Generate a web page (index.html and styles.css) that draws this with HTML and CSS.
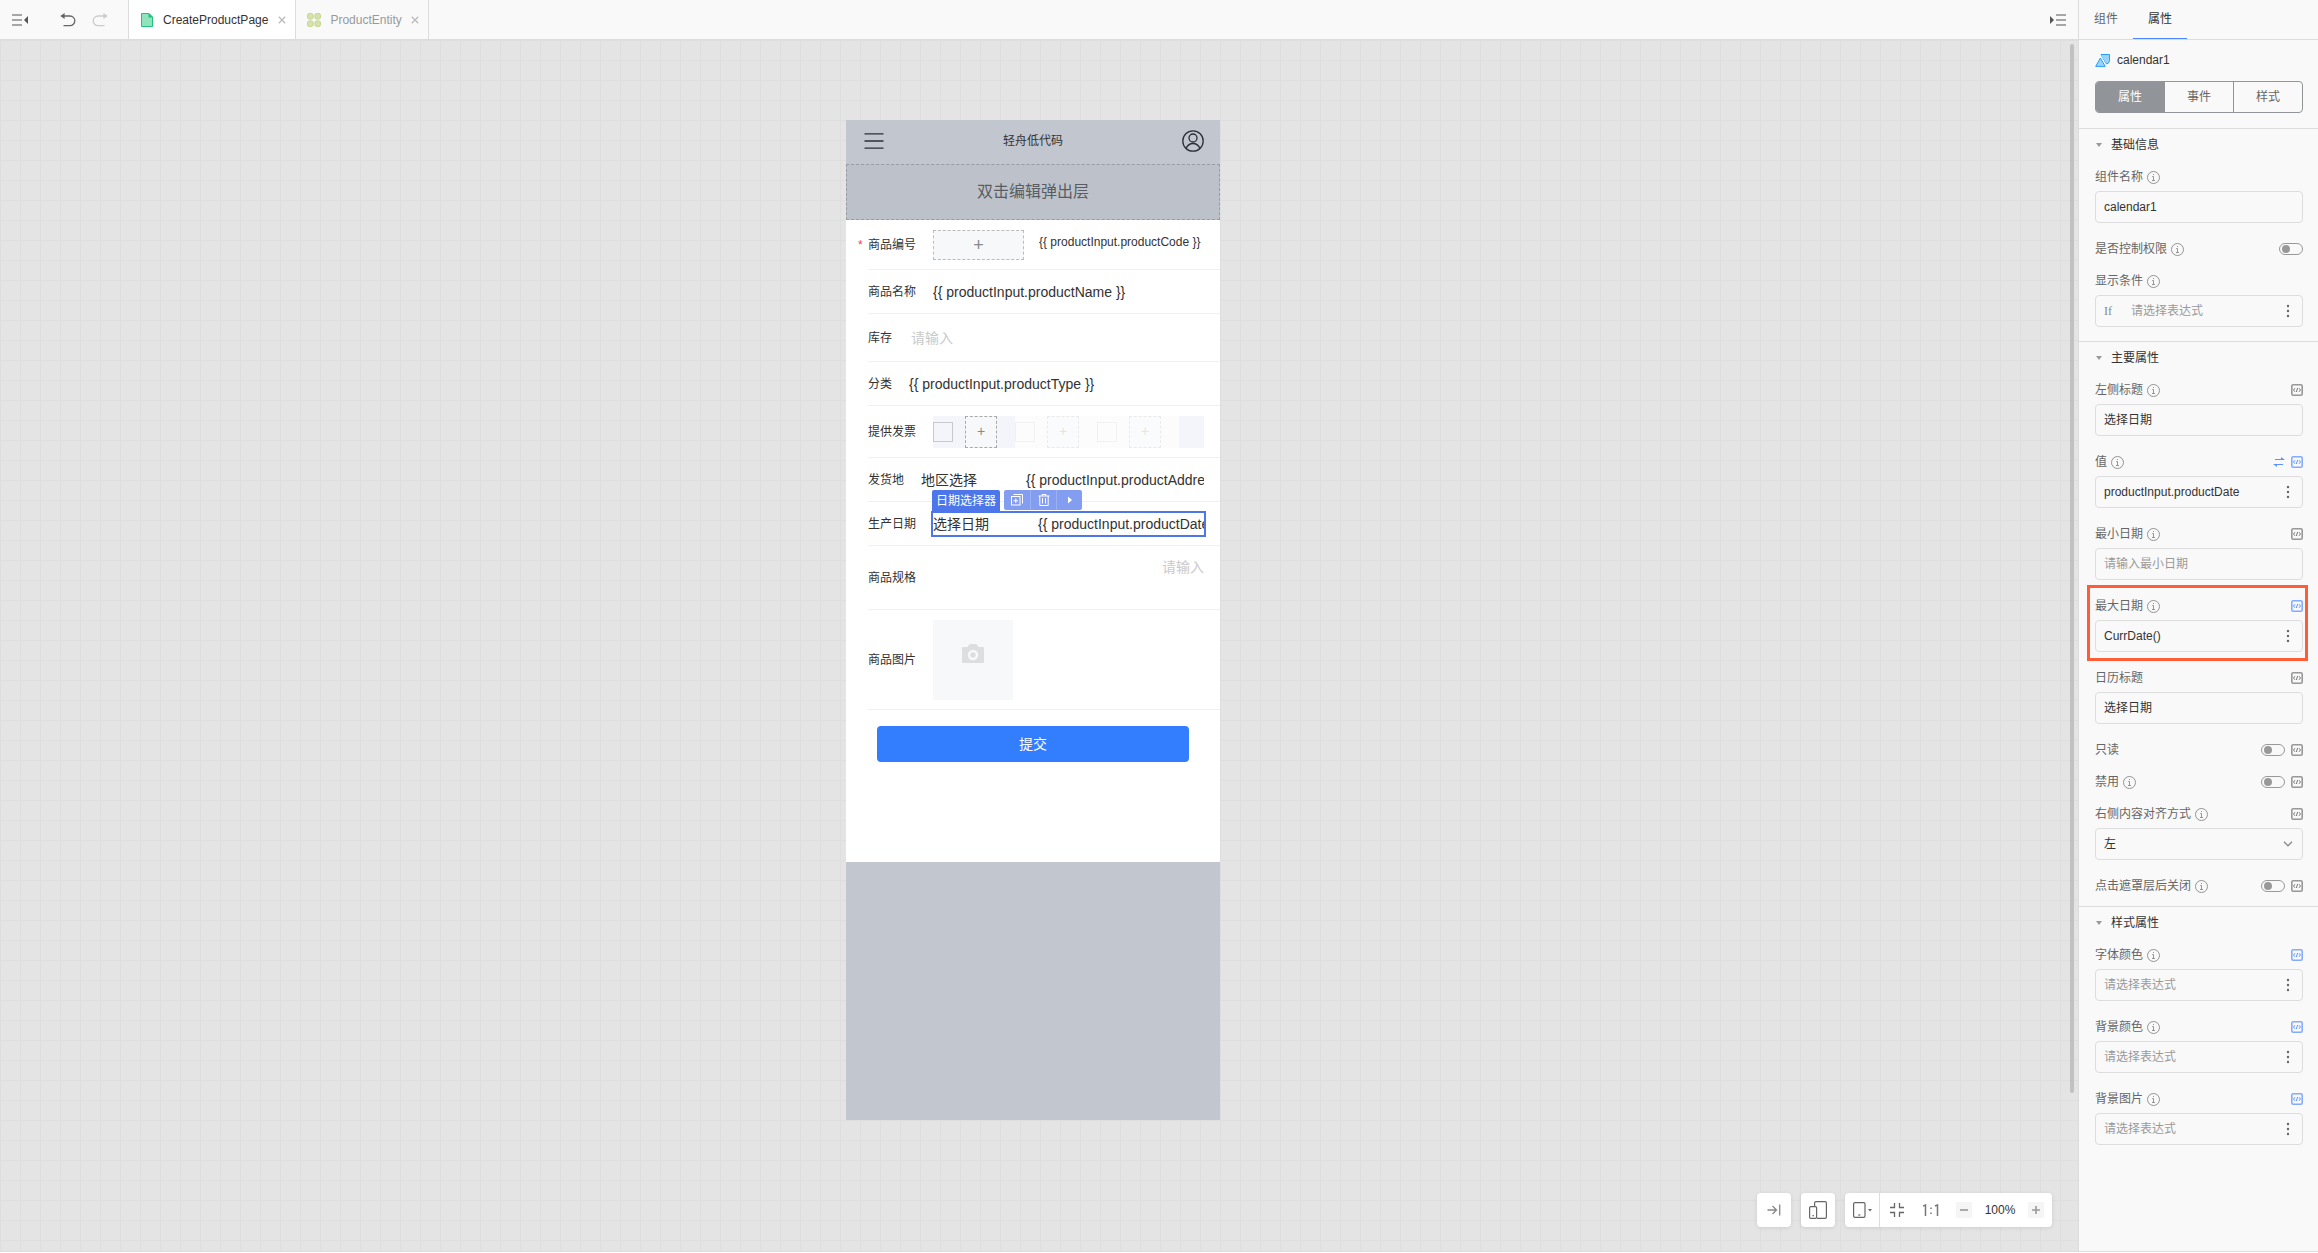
FILE: index.html
```html
<!DOCTYPE html>
<html lang="zh-CN">
	<head>
		<meta charset="UTF-8" />
		<meta name="viewport" content="width=device-width, initial-scale=1.0" />
		<title>CreateProductPage</title>
		<link rel="stylesheet" href="styles.css">
	</head>
	<body>
		<svg class="sprite" aria-hidden="true">
			<symbol id="info" viewBox="0 0 13 13">
				<circle cx="6.5" cy="6.5" r="6" fill="none" stroke="currentColor" stroke-width="0.9" />
				<path d="M6 3.500h1M5.200 5.500h1.300v3.500M5 9.500h3" fill="none" stroke="currentColor" stroke-width="0.9" />
			</symbol>
			<symbol id="code" viewBox="0 0 12 12">
				<rect x="0.8" y="0.8" width="10.4" height="10.4" rx="1.4" fill="none" stroke="currentColor" stroke-width="1.600" opacity="0.75" />
				<path d="M4 4.200L2.500 6l1.500 1.800M8 4.200L9.500 6 8 7.800M6.600 4L5.400 8" fill="none" stroke="currentColor" />
			</symbol>
			<symbol id="dots" viewBox="0 0 4 14">
				<circle cx="2" cy="2" r="1.2" /><circle cx="2" cy="7" r="1.2" /><circle cx="2" cy="12" r="1.2" />
			</symbol>
			<symbol id="close" viewBox="0 0 8 8">
				<path d="M0.8 0.8l6.4 6.4M7.2 0.8L0.8 7.2" fill="none" stroke="currentColor" stroke-width="1.3" />
			</symbol>
			<symbol id="undo" viewBox="0 0 16 14">
				<path d="M1.5 3H10a4.7 4.7 0 0 1 0 9.6H3.5" fill="none" stroke="currentColor" stroke-width="1.3" />
				<path d="M0.3 3L4.6 0v6z" fill="currentColor" />
			</symbol>
			<symbol id="fold" viewBox="0 0 16 12">
				<path d="M0 1h10M0 6h10M0 11h10" fill="none" stroke="#a6a6a6" stroke-width="1.8" />
				<path d="M16 2v8l-4-4z" fill="#555" />
			</symbol>
		</svg>
		<div class="app">
			<main class="editor">
				<header class="topbar">
					<div class="tools">
						<button class="icon-btn" aria-label="收起"><svg width="16" height="12"><use href="#fold" /></svg></button>
						<button class="icon-btn undo" aria-label="撤销"><svg width="16" height="14"><use href="#undo" /></svg></button>
						<button class="icon-btn redo" aria-label="重做"><svg width="16" height="14"><use href="#undo" /></svg></button>
					</div>
					<div class="tab active">
						<svg width="12" height="14" viewBox="0 0 12 14"><path d="M0.5 0.5H8L11.5 4v9.5H0.5z" fill="#8fe3bd" stroke="#1fc17b" /><path d="M7.5 0L12 4.6H7.5z" fill="#1fc17b" /></svg>
						<span>CreateProductPage</span>
						<button class="icon-btn" aria-label="关闭"><svg width="8" height="8"><use href="#close" /></svg></button>
					</div>
					<div class="tab">
						<svg width="14" height="14" viewBox="0 0 14 14" fill="#d5e2ae" stroke="#c3d68d"><rect x="0.5" y="0.5" width="5.6" height="5.6" rx="1.8" /><rect x="7.9" y="0.5" width="5.6" height="5.6" rx="1.8" /><rect x="0.5" y="7.9" width="5.6" height="5.6" rx="1.8" /><rect x="7.9" y="7.9" width="5.6" height="5.6" rx="1.8" /></svg>
						<span>ProductEntity</span>
						<button class="icon-btn" aria-label="关闭"><svg width="8" height="8"><use href="#close" /></svg></button>
					</div>
					<button class="icon-btn unfold" aria-label="展开"><svg width="16" height="12"><use href="#fold" /></svg></button>
				</header>
				<div class="canvas">
					<div class="phone">
						<div class="phone-head">
							<svg width="20" height="16" viewBox="0 0 20 16"><path d="M0.5 0.8h19M0.5 8h19M0.5 15.2h19" fill="none" stroke="#2b2f38" stroke-width="1.3" /></svg>
							<span>轻舟低代码</span>
							<svg width="22" height="22" viewBox="0 0 22 22" fill="none" stroke="#2b2f38" stroke-width="1.3"><circle cx="11" cy="11" r="10.2" /><circle cx="11" cy="8" r="4" /><path d="M4 18.4c1.6-3.4 4-4.9 7-4.9s5.400 1.5 7 4.900" /></svg>
						</div>
						<div class="popup">双击编辑弹出层</div>
						<form class="form">
							<div class="cell cell-code">
								<span class="cell-label required">商品编号</span>
								<button type="button" class="slot">+</button>
								<span class="small">{{ productInput.productCode }}</span>
							</div>
							<div class="cell">
								<span class="cell-label">商品名称</span>
								<span>{{ productInput.productName }}</span>
							</div>
							<div class="cell cell-stock">
								<label class="cell-label" for="stock">库存</label>
								<input id="stock" type="text" placeholder="请输入" />
							</div>
							<div class="cell">
								<span class="cell-label">分类</span>
								<span>{{ productInput.productType }}</span>
							</div>
							<div class="cell cell-invoice">
								<span class="cell-label">提供发票</span>
								<div class="strip">
									<div class="group"><input type="checkbox" aria-label="发票" /><span>+</span></div>
									<div class="group ghost"><input type="checkbox" aria-label="发票" /><span>+</span></div>
									<div class="group ghost"><input type="checkbox" aria-label="发票" /><span>+</span></div>
								</div>
							</div>
							<div class="cell">
								<span class="cell-label">发货地</span>
								<div class="picker"><span>地区选择</span><span>{{ productInput.productAddress }}</span></div>
							</div>
							<div class="cell">
								<span class="cell-label">生产日期</span>
								<div class="selected">
									<div class="picker"><span>选择日期</span><span>{{ productInput.productDate }}</span></div>
									<div class="select-bar">
										<span class="select-name">日期选择器</span>
										<div class="select-tools">
											<button type="button" aria-label="复制"><svg width="12" height="12" viewBox="0 0 12 12" fill="none" stroke="#fff"><rect x="0.5" y="2.500" width="8.500" height="8.500" /><path d="M2.500 0.500h9v9M4.800 4.500v4.500M2.500 6.800H7" /></svg></button>
											<button type="button" aria-label="删除"><svg width="12" height="12" viewBox="0 0 12 12" fill="none" stroke="#fff"><path d="M0.500 2h11M4 2V0.500h4V2M1.800 2v9.500h8.400V2M4.500 4v5.500M7.500 4v5.500" /></svg></button>
											<button type="button" aria-label="更多"><svg width="6" height="8" viewBox="0 0 6 8"><path d="M1 0.500L5 4 1 7.500z" fill="#fff" /></svg></button>
										</div>
									</div>
								</div>
							</div>
							<div class="cell cell-spec">
								<label class="cell-label" for="spec">商品规格</label>
								<textarea id="spec" rows="2" placeholder="请输入"></textarea>
							</div>
							<div class="cell cell-image">
								<span class="cell-label">商品图片</span>
								<button type="button" class="upload" aria-label="上传图片"><svg width="22" height="20" viewBox="0 0 22 20"><path d="M1 3h4.500l1.500-2.200Q7.500 0 8.500 0h5q1 0 1.500 0.800L16.500 3H21q1 0 1 1v14q0 1-1 1H1q-1 0-1-1V4q0-1 1-1zM11 5.800a5.200 5.200 0 1 0 0 10.400 5.200 5.200 0 0 0 0-10.400zm0 2.500a2.700 2.700 0 1 1 0 5.400 2.700 2.700 0 0 1 0-5.400z" fill="#dcdee0" fill-rule="evenodd" /></svg></button>
							</div>
							<button type="button" class="submit">提交</button>
						</form>
					</div>
					<div class="scrollbar"></div>
					<div class="zoom-bar">
						<button class="panel" aria-label="收起工具"><svg width="14" height="12" viewBox="0 0 14 12" fill="none" stroke="#888" stroke-width="1.300"><path d="M0.500 6h9M5.500 2l4 4-4 4M12.700 0.500v11" /></svg></button>
						<button class="panel" aria-label="多端"><svg width="18" height="18" viewBox="0 0 18 18" fill="none" stroke="#666" stroke-width="1.200"><path d="M5.600 5V2q0-1.400 1.400-1.400h9q1.400 0 1.400 1.400v14q0 1.400-1.400 1.400H8" /><rect x="0.600" y="5.600" width="7" height="11.800" rx="1.200" /><path d="M3.500 14.600h1.400" /></svg></button>
						<div class="panel zoom-group">
							<button class="device" aria-label="设备"><svg width="19" height="16" viewBox="0 0 19 16"><rect x="0.600" y="0.600" width="11.400" height="14.800" rx="1.400" fill="none" stroke="#666" stroke-width="1.200" /><path d="M5.300 13h2" stroke="#666" stroke-width="1.200" /><path d="M15 7h4l-2 2.600z" fill="#666" /></svg></button>
							<button class="fit" aria-label="适应"><svg width="14" height="14" viewBox="0 0 14 14" fill="none" stroke="#666" stroke-width="1.300"><path d="M0 4.500h4.500V0M9.500 0v4.500H14M0 9.500h4.500V14M9.500 14V9.500H14" /></svg></button>
							<button class="ratio" aria-label="1:1"><svg width="16" height="12" viewBox="0 0 16 12" fill="none" stroke="#777" stroke-width="1.500"><path d="M0 2l2.500-1v11M12 2l2.500-1v11M8 3.500v1.600M8 8.500v1.600" /></svg></button>
							<button class="step" aria-label="缩小"><svg width="8" height="8" viewBox="0 0 8 8"><path d="M0 4h8" stroke="#999" stroke-width="1.600" /></svg></button>
							<span class="percent">100%</span>
							<button class="step" aria-label="放大"><svg width="8" height="8" viewBox="0 0 8 8"><path d="M0 4h8M4 0v8" stroke="#999" stroke-width="1.600" /></svg></button>
						</div>
					</div>
				</div>
			</main>
			<aside class="sidebar">
				<nav class="side-tabs">
					<a href="#components">组件</a>
					<a href="#props" class="active">属性</a>
				</nav>
				<div class="side-head">
					<div class="side-name">
						<svg width="15" height="13" viewBox="0 0 15 13" fill="#9ad4fd" stroke="#2a9df4"><path d="M6 0.500h8.500V6.500q0 2.500-2.500 3.300h-1L6 2z" /><path d="M5.400 3.200L10.800 12.400H0.200z" stroke="#f9f9f9" stroke-width="2.600" /><path d="M5.400 4L10.200 12.400H0.700z" /></svg>
						<span>calendar1</span>
					</div>
					<div class="segment">
						<button class="active">属性</button>
						<button>事件</button>
						<button>样式</button>
					</div>
				</div>

				<section class="group-box">
					<h3>基础信息</h3>
					<div class="field">
						<div class="field-label"><label for="name">组件名称</label><svg class="info"><use href="#info" /></svg></div>
						<div class="box"><input id="name" type="text" value="calendar1" /></div>
					</div>
					<div class="field-inline">
						<div class="field-label"><label for="auth">是否控制权限</label><svg class="info"><use href="#info" /></svg></div>
						<input id="auth" class="switch" type="checkbox" />
					</div>
					<div class="field">
						<div class="field-label"><label for="cond">显示条件</label><svg class="info"><use href="#info" /></svg></div>
						<div class="box"><span class="if">If</span><input id="cond" type="text" placeholder="请选择表达式" /><button class="more" aria-label="更多"><svg><use href="#dots" /></svg></button></div>
					</div>
				</section>

				<section class="group-box">
					<h3>主要属性</h3>
					<div class="field">
						<div class="field-label"><label for="left-title">左侧标题</label><svg class="info"><use href="#info" /></svg><svg class="code"><use href="#code" /></svg></div>
						<div class="box"><input id="left-title" type="text" value="选择日期" /></div>
					</div>
					<div class="field">
						<div class="field-label"><label for="value">值</label><svg class="info"><use href="#info" /></svg><svg class="swap" viewBox="0 0 12 10"><path d="M2 2.500h8M2 7.500h8" fill="none" stroke="currentColor" /><path d="M8 0L12 3H8zM4 10L0 7h4z" fill="currentColor" /></svg><svg class="code on"><use href="#code" /></svg></div>
						<div class="box"><input id="value" type="text" value="productInput.productDate" /><button class="more" aria-label="更多"><svg><use href="#dots" /></svg></button></div>
					</div>
					<div class="field">
						<div class="field-label"><label for="min">最小日期</label><svg class="info"><use href="#info" /></svg><svg class="code"><use href="#code" /></svg></div>
						<div class="box"><input id="min" type="text" placeholder="请输入最小日期" /></div>
					</div>
					<div class="field highlight">
						<div class="field-label"><label for="max">最大日期</label><svg class="info"><use href="#info" /></svg><svg class="code on"><use href="#code" /></svg></div>
						<div class="box"><input id="max" type="text" value="CurrDate()" /><button class="more" aria-label="更多"><svg><use href="#dots" /></svg></button></div>
					</div>
					<div class="field">
						<div class="field-label"><label for="cal-title">日历标题</label><svg class="code"><use href="#code" /></svg></div>
						<div class="box"><input id="cal-title" type="text" value="选择日期" /></div>
					</div>
					<div class="field-inline">
						<div class="field-label"><label for="readonly">只读</label></div>
						<input id="readonly" class="switch" type="checkbox" /><svg class="code"><use href="#code" /></svg>
					</div>
					<div class="field-inline">
						<div class="field-label"><label for="disabled">禁用</label><svg class="info"><use href="#info" /></svg></div>
						<input id="disabled" class="switch" type="checkbox" /><svg class="code"><use href="#code" /></svg>
					</div>
					<div class="field">
						<div class="field-label"><label for="align">右侧内容对齐方式</label><svg class="info"><use href="#info" /></svg><svg class="code"><use href="#code" /></svg></div>
						<div class="box"><select id="align"><option>左</option></select><svg class="arrow" viewBox="0 0 10 6"><path d="M1 0.800l4 4 4-4" fill="none" stroke="currentColor" stroke-width="1.300" /></svg></div>
					</div>
					<div class="field-inline">
						<div class="field-label"><label for="mask">点击遮罩层后关闭</label><svg class="info"><use href="#info" /></svg></div>
						<input id="mask" class="switch" type="checkbox" /><svg class="code"><use href="#code" /></svg>
					</div>
				</section>

				<section class="group-box">
					<h3>样式属性</h3>
					<div class="field">
						<div class="field-label"><label for="color">字体颜色</label><svg class="info"><use href="#info" /></svg><svg class="code on"><use href="#code" /></svg></div>
						<div class="box"><input id="color" type="text" placeholder="请选择表达式" /><button class="more" aria-label="更多"><svg><use href="#dots" /></svg></button></div>
					</div>
					<div class="field">
						<div class="field-label"><label for="bg-color">背景颜色</label><svg class="info"><use href="#info" /></svg><svg class="code on"><use href="#code" /></svg></div>
						<div class="box"><input id="bg-color" type="text" placeholder="请选择表达式" /><button class="more" aria-label="更多"><svg><use href="#dots" /></svg></button></div>
					</div>
					<div class="field">
						<div class="field-label"><label for="bg-image">背景图片</label><svg class="info"><use href="#info" /></svg><svg class="code on"><use href="#code" /></svg></div>
						<div class="box"><input id="bg-image" type="text" placeholder="请选择表达式" /><button class="more" aria-label="更多"><svg><use href="#dots" /></svg></button></div>
					</div>
				</section>
			</aside>
		</div>
	</body>
</html>
```
FILE: styles.css
```css
* {
	padding: 0;
	margin: 0;
	box-sizing: border-box;
}
body {
	height: 100vh;
	padding-bottom: 1px;
	background: #fff;
	color: #333;
	font-family: "Liberation Sans", "Noto Sans CJK SC", sans-serif;
	font-size: 12px;
	line-height: 20px;
}
button,
input,
textarea,
select {
	border: none;
	outline: none;
	background: none;
	color: inherit;
	font: inherit;
}
svg {
	display: block;
	flex: none;
}
.sprite {
	position: absolute;
	width: 0;
	height: 0;
}
.app {
	display: grid;
	grid-template-columns: 1fr 240px;
	height: 100%;
	border-bottom: 1px solid #ddd;
}
.editor {
	display: flex;
	flex-direction: column;
	min-width: 0;
}

/* topbar */
.topbar {
	display: flex;
	height: 40px;
	border-bottom: 1px solid #dcdcdc;
	background: #f9f9f9;
}
.icon-btn {
	display: flex;
	align-items: center;
}
.tools {
	display: flex;
	align-items: center;
	width: 128px;
	padding-left: 12px;
}
.undo {
	margin-left: 32px;
	color: #666;
}
.redo {
	margin-left: 16px;
	color: #ccc;
	transform: scaleX(-1);
}
.tab {
	display: flex;
	align-items: center;
	gap: 10px;
	padding: 0 9px 0 11px;
	border-right: 1px solid #dcdcdc;
	color: #999;
}
.tab:not(.active) {
	gap: 9px;
}
.tab.active {
	padding-left: 12px;
	border-left: 1px solid #dcdcdc;
	background: #fff;
	color: #333;
}
.tab .icon-btn {
	color: #bbb;
}
.unfold {
	margin: 0 12px 0 auto;
	transform: scaleX(-1);
}

/* canvas */
.canvas {
	position: relative;
	flex: 1;
	padding: 80px 12px 0 0;
	background-color: #e4e4e4;
	background-image: linear-gradient(#dedede 1px, transparent 1px),
		linear-gradient(90deg, #dedede 1px, transparent 1px);
	background-size: 20px 20px;
}
.scrollbar {
	position: absolute;
	top: 4px;
	right: 4px;
	width: 4px;
	height: 1049px;
	border-radius: 2px;
	background: #c1c1c1;
}
.phone {
	width: 374px;
	min-height: 1000px;
	margin: 0 auto;
	background: #c2c6cf;
	color: #323233;
}
.phone-head {
	display: flex;
	align-items: center;
	justify-content: space-between;
	height: 44px;
	padding: 0 16px 2px 18px;
}
.popup {
	height: 56px;
	border: 1px dashed #989da5;
	background: #bdc2ca;
	color: #595d63;
	font-size: 16px;
	line-height: 54px;
	text-align: center;
}
.form {
	height: 642px;
	background: #fff;
}
.cell {
	display: flex;
	align-items: center;
	height: 44px;
	margin-left: 22px;
	padding-right: 16px;
	border-bottom: 1px solid #f0f0f0;
	font-size: 14px;
}
.cell-label {
	position: relative;
	flex: none;
	margin-right: 17px;
	font-size: 12px;
}
.required::before {
	content: "*";
	position: absolute;
	left: -10px;
	color: #ee4a4a;
}
.cell ::placeholder {
	color: #c8c9cc;
}
.cell-code {
	height: 50px;
}
.slot {
	width: 91px;
	height: 30px;
	margin-right: 15px;
	border: 1px dashed #bbb;
	background: #f7f8fa;
	color: #888;
	font-size: 18px;
	line-height: 26px;
}
.small {
	padding-bottom: 6px;
	font-size: 12px;
}
.cell-stock {
	height: 48px;
}
.cell-stock input {
	flex: 1;
	padding-left: 2px;
}
.cell-invoice {
	height: 52px;
}
.strip {
	display: flex;
	flex: 1;
	height: 32px;
	background: #f4f5fa;
}
.group {
	display: flex;
	align-items: center;
	gap: 12px;
	width: 82px;
}
.group input {
	appearance: none;
	width: 20px;
	height: 20px;
	border: 1px solid #c8c9cc;
}
.group span {
	width: 32px;
	height: 32px;
	border: 1px dashed #aaa;
	background: #f7f8fa;
	color: #888;
	line-height: 29px;
	text-align: center;
}
.group.ghost {
	background: #fcfcfd;
}
.group.ghost input,
.group.ghost span {
	opacity: 0.2;
}
.picker {
	display: flex;
	flex: 1;
	gap: 49px;
	min-width: 0;
	overflow: hidden;
	white-space: nowrap;
}
.picker span:first-child {
	flex: none;
}
.selected {
	position: relative;
	display: flex;
	flex: 1;
	min-width: 0;
	padding: 1px 0;
	outline: 2px solid #4c76ea;
}
.select-bar {
	position: absolute;
	left: -1px;
	bottom: 100%;
	display: flex;
	gap: 4px;
	color: #fff;
	font-size: 12px;
}
.select-name {
	height: 23px;
	padding: 1px 4px;
	border-radius: 2px 2px 0 0;
	background: #4c76ea;
}
.select-tools {
	display: flex;
	height: 20px;
	border-radius: 2px;
	background: #839df0;
}
.select-tools button {
	display: grid;
	place-items: center;
	width: 26px;
}
.select-tools button + button {
	border-left: 1px solid #9cb1f4;
}
.cell-spec {
	height: 64px;
}
.cell-spec textarea {
	flex: 1;
	min-width: 0;
	height: 42px;
	resize: none;
	text-align: right;
}
.cell-image {
	height: 100px;
}
.upload {
	display: grid;
	place-items: center;
	width: 80px;
	height: 80px;
	padding-bottom: 12px;
	background: #f7f8fa;
}
.submit {
	display: block;
	width: 312px;
	height: 36px;
	margin: 16px auto;
	border-radius: 4px;
	background: #337eff;
	color: #fff;
	font-size: 14px;
}

/* zoom bar */
.zoom-bar {
	position: absolute;
	right: 26px;
	bottom: 24px;
	display: flex;
	gap: 10px;
}
.panel {
	display: grid;
	place-items: center;
	width: 34px;
	height: 34px;
	border-radius: 4px;
	background: #fff;
	box-shadow: 0 1px 4px rgba(0, 0, 0, 0.1);
}
.zoom-group {
	display: flex;
	width: auto;
	padding-right: 8px;
}
.zoom-group button {
	display: grid;
	place-items: center;
	width: 34px;
	height: 34px;
}
.zoom-group .device {
	width: 35px;
	border-right: 1px solid #ddd;
}
.zoom-group .ratio {
	margin-right: 8px;
}
.zoom-group .step {
	width: 16px;
	height: 16px;
	border-radius: 2px;
	background: #f5f5f5;
}
.percent {
	width: 56px;
	text-align: center;
}

/* sidebar */
.sidebar {
	border-left: 1px solid #dcdcdc;
	background: #f9f9f9;
}
.side-tabs {
	display: flex;
	height: 40px;
	border-bottom: 1px solid #dcdcdc;
}
.side-tabs a {
	padding: 0 15px;
	color: #666;
	line-height: 38px;
	text-decoration: none;
}
.side-tabs .active {
	border-bottom: 1px solid #4c88ff;
	color: #333;
}
.side-head {
	padding: 10px 15px 15px 16px;
}
.side-name {
	display: flex;
	align-items: center;
	gap: 7px;
	margin-bottom: 11px;
}
.segment {
	display: flex;
	height: 32px;
	overflow: hidden;
	border: 1px solid #919499;
	border-radius: 4px;
}
.segment button {
	flex: 1;
	color: #666;
}
.segment button + button {
	border-left: 1px solid #919499;
}
.segment .active {
	background: #919499;
	color: #fff;
}
.group-box {
	padding: 0 15px 10px 16px;
	border-top: 1px solid #dcdcdc;
}
.group-box h3 {
	display: flex;
	align-items: center;
	gap: 9px;
	height: 32px;
	margin-bottom: 6px;
	font-size: 12px;
	font-weight: normal;
}
.group-box h3::before {
	content: "";
	margin-left: 1px;
	border: 3px solid transparent;
	border-top: 4px solid #999;
	border-bottom: none;
}
.field {
	padding-bottom: 4px;
}
.field-label {
	display: flex;
	flex: 1;
	align-items: center;
	height: 20px;
	color: #666;
}
.field .field-label {
	margin-bottom: 4px;
}
.field + .field,
.field + .field-inline,
.field-inline + .field,
.field-inline + .field-inline {
	margin-top: 12px;
}
.field-inline {
	display: flex;
	align-items: center;
	gap: 6px;
}
.info {
	width: 13px;
	height: 13px;
	margin-left: 4px;
	color: #888;
}
.code {
	width: 12px;
	height: 12px;
	color: #777;
}
.field-label .code {
	margin-left: auto;
}
.code.on,
.swap {
	color: #5c92ff;
}
.swap {
	width: 12px;
	height: 10px;
	margin-left: auto;
}
.field-label .swap + .code {
	margin-left: 6px;
}
.switch {
	appearance: none;
	width: 24px;
	height: 12px;
	padding: 1px;
	border: 1px solid #999;
	border-radius: 6px;
}
.switch::before {
	content: "";
	display: block;
	width: 8px;
	height: 8px;
	margin-left: 1px;
	border-radius: 50%;
	background: #999;
}
.box {
	display: flex;
	align-items: center;
	height: 32px;
	padding: 0 8px;
	border: 1px solid #ddd;
	border-radius: 4px;
}
.box input,
.box select {
	flex: 1;
	min-width: 0;
	appearance: none;
}
.box ::placeholder {
	color: #999;
}
.if {
	width: 27px;
	color: #888;
	font-family: "Liberation Serif", serif;
}
.more svg {
	width: 4px;
	height: 14px;
	margin-right: 4px;
	fill: #666;
}
.arrow {
	width: 10px;
	height: 6px;
	margin-right: 1px;
	color: #888;
}
.highlight {
	position: relative;
}
.highlight::after {
	content: "";
	position: absolute;
	inset: -11px -5px -5px -8px;
	border: 3px solid #ff5c38;
	pointer-events: none;
}
```
